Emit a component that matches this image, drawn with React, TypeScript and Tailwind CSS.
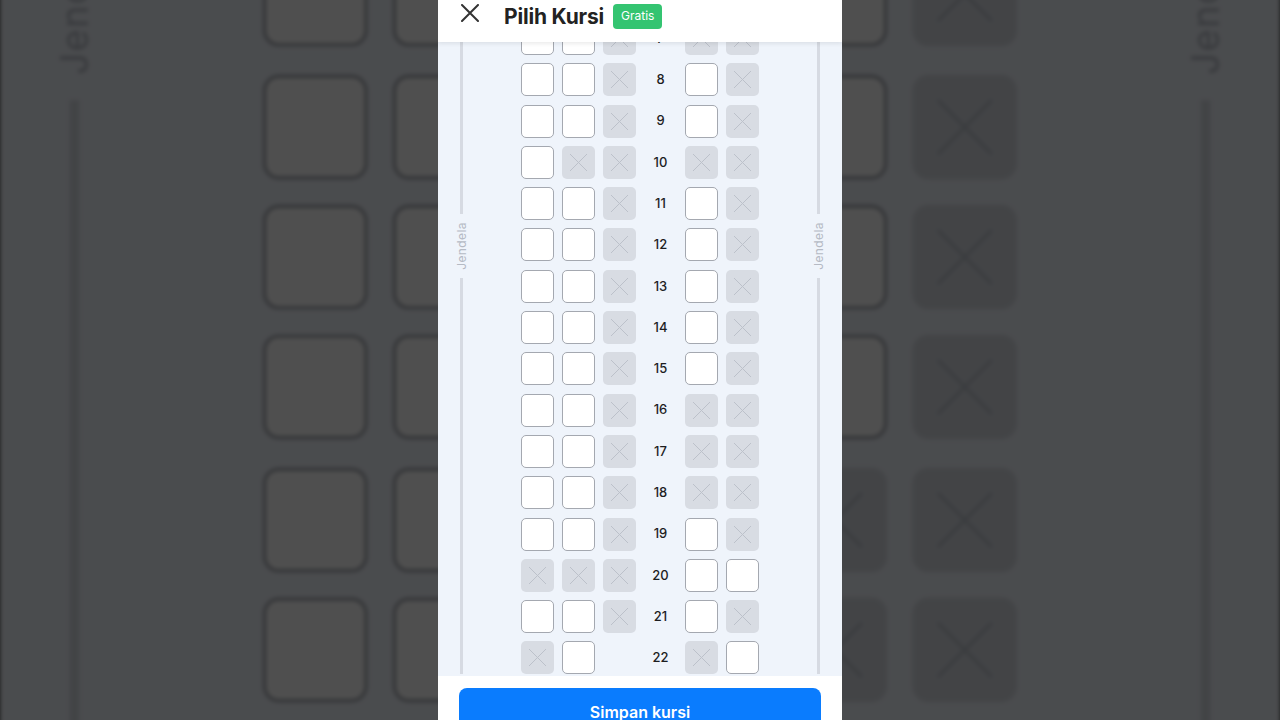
type Cell = 'O' | 'X' | '-'

const seatRows: { no: number; left: string; right: string }[] = [
  { no: 7, left: 'OOX', right: 'XX' },
  { no: 8, left: 'OOX', right: 'OX' },
  { no: 9, left: 'OOX', right: 'OX' },
  { no: 10, left: 'OXX', right: 'XX' },
  { no: 11, left: 'OOX', right: 'OX' },
  { no: 12, left: 'OOX', right: 'OX' },
  { no: 13, left: 'OOX', right: 'OX' },
  { no: 14, left: 'OOX', right: 'OX' },
  { no: 15, left: 'OOX', right: 'OX' },
  { no: 16, left: 'OOX', right: 'XX' },
  { no: 17, left: 'OOX', right: 'XX' },
  { no: 18, left: 'OOX', right: 'XX' },
  { no: 19, left: 'OOX', right: 'OX' },
  { no: 20, left: 'XXX', right: 'OO' },
  { no: 21, left: 'OOX', right: 'OX' },
  { no: 22, left: 'XO-', right: 'XO' },
]

function Seat({ type }: { type: Cell }) {
  if (type === '-') return <div className="w-[33px] h-[33px]" />
  if (type === 'X')
    return (
      <div className="w-[33px] h-[33px] rounded-[5px] bg-[#d8dce3]">
        <svg width="33" height="33" viewBox="0 0 33 33">
          <path d="M8 8 L25 25 M25 8 L8 25" stroke="#bcc1ca" strokeWidth="1" />
        </svg>
      </div>
    )
  return <div className="w-[33px] h-[33px] rounded-[5px] bg-white border border-[#a4a8b0]" />
}

function Rail() {
  return (
    <div className="w-[3px] flex flex-col items-center">
      <div className="w-[3px] h-[192px] bg-[#d6dae2]" />
      <div className="my-[9px] h-[46px] w-[3px] flex items-center justify-center">
        <span className="block -rotate-90 whitespace-nowrap text-[12px] leading-none text-[#b5bac4] tracking-[0.4px]">
          Jendela
        </span>
      </div>
      <div className="w-[3px] flex-1 bg-[#d6dae2]" />
    </div>
  )
}

function Screen() {
  return (
    <div className="w-[404px] h-[720px] flex flex-col overflow-hidden bg-white font-['Inter',sans-serif]">
      <div className="relative z-10 h-[42px] shrink-0 bg-white shadow-[0_2px_4px_rgba(0,0,0,0.08)]">
        <div className="h-[32px] flex items-center pl-[23px]">
          <svg width="18" height="18" viewBox="0 0 18 18" className="mb-[6px]">
            <path d="M1 1 L17 17 M17 1 L1 17" stroke="#333" strokeWidth="2" strokeLinecap="round" />
          </svg>
          <div className="ml-[25px] text-[21px] font-bold text-[#222] leading-none tracking-[-0.2px]">Pilih Kursi</div>
          <div className="ml-[9px] h-[25px] px-[8px] rounded-[4px] bg-[#34c471] text-white text-[12px] flex items-center">
            Gratis
          </div>
        </div>
      </div>

      <div className="flex-1 overflow-hidden bg-[#eff4fb]">
        <div className="-mt-[20px] pb-[10px] flex justify-between px-[22px]">
          <Rail />
          <div className="flex flex-col gap-y-[8.3px]">
            {seatRows.map((r) => (
              <div key={r.no} className="flex gap-[8px]">
                {r.left.split('').map((c, i) => (
                  <Seat key={'l' + i} type={c as Cell} />
                ))}
                <div className="w-[33px] h-[33px] flex items-center justify-center text-[13px] font-medium text-[#1d1d1f]">
                  {r.no}
                </div>
                {r.right.split('').map((c, i) => (
                  <Seat key={'r' + i} type={c as Cell} />
                ))}
              </div>
            ))}
          </div>
          <Rail />
        </div>
      </div>

      <div className="h-[44px] shrink-0 bg-white px-[21px] pt-[12px]">
        <div className="h-[48px] rounded-[8px] bg-[#0a7cfe] flex items-center justify-center text-white text-[16px] font-semibold">
          Simpan kursi
        </div>
      </div>
    </div>
  )
}

export default function App() {
  return (
    <div className="relative w-full h-[720px] overflow-hidden bg-[#4a4b4d]">
      <div aria-hidden className="absolute inset-0 flex items-center justify-center">
        <div className="scale-[3.1683] blur-[0.6px]">
          <Screen />
        </div>
      </div>
      <div className="absolute inset-0 bg-black/[0.69]" />
      <div className="relative h-full flex justify-center">
        <Screen />
      </div>
    </div>
  )
}
